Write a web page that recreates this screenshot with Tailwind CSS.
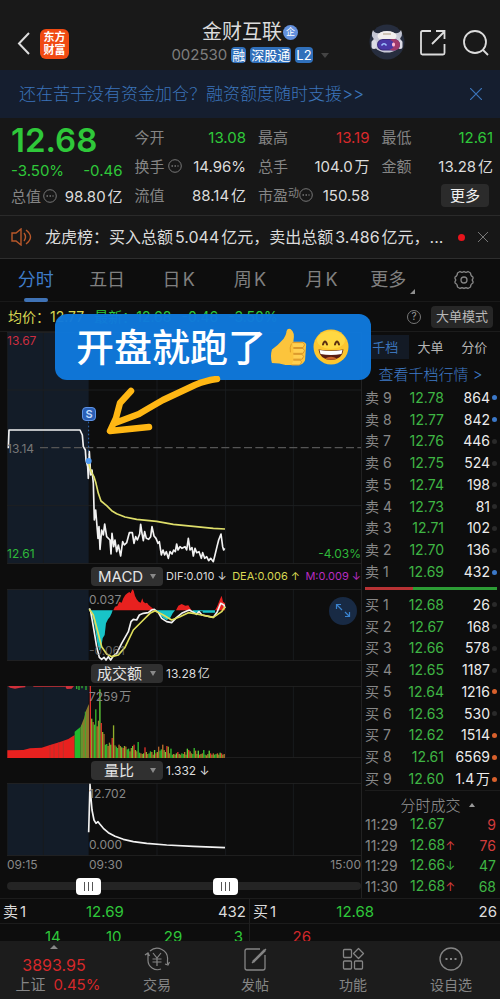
<!DOCTYPE html>
<html lang="zh-CN">
<head>
    <meta charset="UTF-8">
    <meta name="viewport" content="width=device-width, initial-scale=1.0">
    <title>金财互联 002530</title>
    <script src="https://cdn.jsdelivr.net/npm/@tailwindcss/browser@4"></script>
</head>
<body class="bg-[#0d0d0d] text-[#dcdcdc] font-['Inter','Noto_Sans_CJK_SC',sans-serif] leading-none [text-autospace:normal]">

    <!-- Header -->
    <header class="relative flex h-[70px] items-start justify-between bg-[#191919] pl-4 pr-[11px] pt-6">
        <div class="flex items-center gap-2 pt-1">
            <button aria-label="返回" class="h-8 w-4">
                <svg viewBox="0 0 16 32" class="h-8 w-4" fill="none" stroke="#dcdcdc" stroke-width="2"><path d="M13 5L3 15.500L13 26"/></svg>
            </button>
            <div class="w-[29px] rounded-md bg-[#f04a12] py-[2px] text-center text-[11px] font-bold leading-[13px] text-white">东方<br>财富</div>
        </div>
        <div class="absolute inset-x-20 top-[22px] flex flex-col items-center gap-[5px]">
            <h1 class="flex items-center text-xl leading-5">金财互联
                <span class="ml-px grid size-[15px] place-content-center rounded-full bg-[#6390dc] text-[9px] text-white">企</span>
            </h1>
            <div class="flex items-center gap-1 text-[13px] leading-4 text-white">
                <span class="text-[15px] text-[#7e7e7e]">002530</span>
                <span class="rounded-sm bg-[#3070bb] px-px">融</span>
                <span class="rounded-sm bg-[#3070bb] px-px">深股通</span>
                <span class="rounded-sm bg-[#3070bb] px-px">L2</span>
                <svg viewBox="0 0 8 5" class="ml-1 h-[5px] w-2"><path d="M0 0H8L4 5Z" fill="#444"/></svg>
            </div>
        </div>
        <div class="flex items-center gap-3.5">
            <svg viewBox="0 0 36 36" class="size-9">
                <circle cx="18" cy="18" r="17.500" fill="#262d3e"/>
                <path d="M6 16Q1 12 4 6Q6 10 11 9ZM29 16Q35 12 32 6Q30 10 25 9Z" fill="#c3c5d2"/>
                <ellipse cx="18" cy="18" rx="14" ry="10.500" fill="#c9cad8"/>
                <ellipse cx="18" cy="12" rx="9.500" ry="5" fill="#f1eeee"/>
                <path d="M14 10H22" stroke="#b9a890" stroke-width="1.200"/>
                <rect x="2.500" y="16" width="5" height="9" rx="2.500" fill="#dcdce6"/>
                <rect x="28.500" y="16" width="5" height="9" rx="2.500" fill="#dcdce6"/>
                <rect x="8" y="15" width="23" height="11.500" rx="5.750" fill="#3b2b7c"/>
                <rect x="18" y="15" width="13" height="11.500" rx="5.750" fill="#a03a6c"/>
                <rect x="9" y="16" width="16" height="9.500" rx="4.750" fill="#4a38a6"/>
                <path d="M12.500 21.500Q15 18 17.500 21.500" fill="none" stroke="#9cc2ff" stroke-width="1.500"/>
                <rect x="23" y="18.500" width="3" height="4" rx="1.500" fill="#ffb6d2"/>
            </svg>
            <button aria-label="分享" class="size-7">
                <svg viewBox="0 0 28 28" class="size-7" fill="none" stroke="#dcdcdc" stroke-width="1.800"><path d="M12 3H3.500Q2 3 2 4.500V25Q2 26.500 3.500 26.500H24Q25.500 26.500 25.500 25V16M13 16L25 4M17 3H25.500V11"/></svg>
            </button>
            <button aria-label="搜索" class="size-7">
                <svg viewBox="0 0 28 28" class="size-7" fill="none" stroke="#dcdcdc" stroke-width="1.800"><circle cx="14" cy="14" r="11"/><path d="M22 22L27 27"/></svg>
            </button>
        </div>
    </header>

    <div class="flex h-12 items-center justify-between bg-[#151e2f] pl-[19px] pr-[18px] text-[#3b74ba]">
        <a href="#" class="text-[17px] font-light">还在苦于没有资金加仓？融资额度随时支援&gt;&gt;</a>
        <button aria-label="关闭"><svg viewBox="0 0 12 12" class="size-3" stroke="#3b74ba" stroke-width="1.200"><path d="M0 0L12 12M12 0L0 12"/></svg></button>
    </div>

    <!-- Quote summary -->
    <section class="grid h-[98px] grid-cols-4 gap-x-3 border-b border-[#2a2a2a] bg-[#171717] pl-[11px] pr-[7px] pt-[5px] text-[15px]">
        <div class="text-[#2fc83a]">
            <div class="flex h-[34px] items-center text-[33px] font-semibold">12.68</div>
            <div class="flex h-[26px] items-center justify-between"><span>-3.50%</span><span>-0.46</span></div>
            <div class="flex h-[27px] items-center justify-between whitespace-nowrap text-[#dcdcdc]">
                <span class="flex text-[#858585]">总值<svg viewBox="0 0 14 14" class="ml-0.5 size-[14px]" fill="none" stroke="#777"><circle cx="7" cy="7" r="6.300"/><path d="M3.500 7H10.500" stroke-width="1.500" stroke-dasharray="1.500 1.500"/></svg></span>98.80亿
            </div>
        </div>
        <div>
            <div class="flex h-[29px] items-center justify-between text-[#2fc83a]"><span class="text-[#858585]">今开</span>13.08</div>
            <div class="flex h-[29px] items-center justify-between">
                <span class="flex text-[#858585]">换手<svg viewBox="0 0 14 14" class="ml-[3px] size-[14px]" fill="none" stroke="#777"><circle cx="7" cy="7" r="6.300"/><path d="M3.500 7H10.500" stroke-width="1.500" stroke-dasharray="1.500 1.500"/></svg></span>14.96%
            </div>
            <div class="flex h-[29px] items-center justify-between"><span class="text-[#858585]">流值</span>88.14亿</div>
        </div>
        <div>
            <div class="flex h-[29px] items-center justify-between text-[#d8292b]"><span class="text-[#858585]">最高</span>13.19</div>
            <div class="flex h-[29px] items-center justify-between"><span class="text-[#858585]">总手</span>104.0万</div>
            <div class="flex h-[29px] items-center justify-between">
                <span class="flex text-[#858585]">市盈<span class="text-[11px]">动</span><svg viewBox="0 0 14 14" class="size-[14px]" fill="none" stroke="#777"><circle cx="7" cy="7" r="6.300"/><path d="M3.500 7H10.500" stroke-width="1.500" stroke-dasharray="1.500 1.500"/></svg></span>150.58
            </div>
        </div>
        <div>
            <div class="flex h-[29px] items-center justify-between text-[#2fc83a]"><span class="text-[#858585]">最低</span>12.61</div>
            <div class="flex h-[29px] items-center justify-between"><span class="text-[#858585]">金额</span>13.28亿</div>
            <div class="flex h-[29px] items-center justify-end pr-1"><button class="h-[23px] rounded-sm bg-[#2b2b2b] px-[9px] text-[#f0f0f0]">更多</button></div>
        </div>
    </section>

    <div class="flex h-[43px] items-center border-b border-[#2e2e2e] bg-[#171717] pl-[11px] pr-3">
        <svg viewBox="0 0 22 18" class="h-[18px] w-[22px]" fill="none" stroke="#b9582a" stroke-width="1.400"><path d="M1 5H5L10 1V17L5 13H1ZM13 5Q16 9 13 13M15 2Q24 9 15 16"/></svg>
        <p class="ml-3 flex-1 whitespace-nowrap text-base">龙虎榜：买入总额5.044亿元，卖出总额3.486亿元，...</p>
        <span class="size-[7px] rounded-full bg-[#e8141c]"></span>
        <button aria-label="关闭" class="ml-[13px]"><svg viewBox="0 0 10 10" class="size-[10px]" stroke="#777"><path d="M0 0L10 10M10 0L0 10"/></svg></button>
    </div>

    <!-- Period tabs -->
    <nav class="grid h-[43px] grid-cols-7 items-center border-b border-[#191919] text-lg text-[#808080] *:justify-self-center">
        <button class="relative text-[#3f7cc8]">分时<span class="absolute inset-x-1.5 -bottom-2 h-1 rounded-full bg-[#3f72b5]"></span></button>
        <button>五日</button>
        <button>日K</button>
        <button>周K</button>
        <button>月K</button>
        <button class="flex items-end gap-1">更多<svg viewBox="0 0 5 5" class="size-[5px]"><path d="M5 0V5H0Z" fill="#909090"/></svg></button>
        <button aria-label="设置">
            <svg viewBox="0 0 20 20" class="size-5" fill="none" stroke="#858585" stroke-width="1.300" stroke-linejoin="round"><path d="M6 1.500Q8 3 10 1.500Q12 3 14 1.500L16.500 3Q16.500 6 19 7V8.500Q17.500 10 19 11.500V13Q16.500 14 16.500 17L14 18.500Q12 17 10 18.500Q8 17 6 18.500L3.500 17Q3.500 14 1 13V11.500Q2.500 10 1 8.500V7Q3.500 6 3.500 3Z"/><circle cx="10" cy="10" r="3"/></svg>
        </button>
    </nav>

    <div class="relative">
        <div class="flex h-[30px] items-center border-b border-[#1c1c1c] pl-2 pr-[7px] text-sm">
            <div class="flex flex-1 gap-2.5 text-[#2fc83a]">
                <span class="text-[#d8d852]">均价：12.77</span><span>最新：12.68</span><span>-0.46</span><span>-3.50%</span>
            </div>
            <button aria-label="帮助" class="grid size-[14px] place-content-center rounded-full border border-[#777] text-[10px] text-[#999]">?</button>
            <button class="ml-2.5 h-[22px] rounded-sm bg-[#272727] px-[5px] text-[13px] text-[#b8b8b8]">大单模式</button>
        </div>

        <div class="flex">
            <!-- Charts -->
            <main class="min-w-0 flex-1 pl-[7px]">
                <div class="relative h-[232px]">
                    <svg id="price-chart" viewBox="21 -144 1062 696" preserveAspectRatio="none" class="h-full w-full" fill="none"></svg>
                    <span class="absolute left-0 top-px text-xs text-[#cc2e40]">13.67</span>
                    <span class="absolute left-0 top-[109px] text-xs text-[#777]">13.14</span>
                    <span class="absolute bottom-0.5 left-0 text-xs text-[#2fb93a]">12.61</span>
                    <span class="absolute bottom-0.5 right-0 text-xs text-[#2fb93a]">-4.03%</span>
                    <span class="absolute left-[75px] top-[75px] grid size-[14px] place-content-center rounded-sm border border-[#5f94e6] bg-[#2a5fb5] text-[11px] font-semibold text-[#c0dcff]">S</span>
                </div>
                <div class="flex h-[25px] items-center pl-[84px] text-[11px]">
                    <div class="relative">
                        <select aria-label="指标一" class="block h-[19px] w-[72px] appearance-none rounded-sm bg-[#303030] pl-[7px] text-[15px] text-[#e4e4e4]"><option>MACD</option></select>
                        <svg viewBox="0 0 6 5" class="pointer-events-none absolute right-[7px] top-[7px] h-[5px] w-1.5"><path d="M0 0H6L3 5Z" fill="#8a8a8a"/></svg>
                    </div>
                    <div class="flex flex-1 justify-between whitespace-nowrap pl-[3px]"><span>DIF:0.010 ↓</span><span class="text-[#d8d852]">DEA:0.006 ↑</span><span class="text-[#b82cc0]">M:0.009 ↓</span></div>
                </div>
                <div class="relative h-[72px]">
                    <svg id="macd-chart" viewBox="21 87 1062 216" preserveAspectRatio="none" class="h-full w-full" fill="none"></svg>
                    <span class="absolute left-[82px] top-[3px] text-xs text-[#888]">0.037</span>
                    <span class="absolute bottom-[2px] left-[82px] text-xs text-[#888]/70">-0.061</span>
                    <button aria-label="放大" class="absolute right-1 top-2 size-7 rounded-full bg-[#182a44]">
                        <svg viewBox="0 0 28 28" class="size-7" fill="none" stroke="#3a83cf" stroke-width="1.200"><path d="M13 13L8 8M7.500 12V7.500H12M16 15L20 19M20.500 15V19.500H16"/></svg>
                    </button>
                </div>
                <div class="flex h-[25px] items-center gap-[3px] pl-[84px] text-xs">
                    <div class="relative">
                        <select aria-label="指标二" class="block h-[19px] w-[72px] appearance-none rounded-sm bg-[#303030] pl-1.5 text-[15px] text-[#e4e4e4]"><option>成交额</option></select>
                        <svg viewBox="0 0 6 5" class="pointer-events-none absolute right-[7px] top-[7px] h-[5px] w-1.5"><path d="M0 0H6L3 5Z" fill="#8a8a8a"/></svg>
                    </div>
                    <span>13.28亿</span>
                </div>
                <div class="relative h-[72px]">
                    <svg id="volume-chart" viewBox="21 18 1062 216" preserveAspectRatio="none" class="h-full w-full" fill="none"></svg>
                    <span class="absolute left-[82px] top-[3px] text-xs text-[#888]">7259万</span>
                </div>
                <div class="flex h-[25px] items-center gap-[3px] pl-[84px] text-xs">
                    <div class="relative">
                        <select aria-label="指标三" class="block h-[19px] w-[72px] appearance-none rounded-sm bg-[#303030] pl-[13px] text-[15px] text-[#e4e4e4]"><option>量比</option></select>
                        <svg viewBox="0 0 6 5" class="pointer-events-none absolute right-[7px] top-[7px] h-[5px] w-1.5"><path d="M0 0H6L3 5Z" fill="#8a8a8a"/></svg>
                    </div>
                    <span>1.332 ↓</span>
                </div>
                <div class="relative h-[73px]">
                    <svg id="ratio-chart" viewBox="21 24 1062 219" preserveAspectRatio="none" class="h-full w-full" fill="none"></svg>
                    <span class="absolute left-[82px] top-[3px] text-xs text-[#888]">12.702</span>
                    <span class="absolute bottom-[3px] left-[82px] text-xs text-[#888]">0.000</span>
                </div>
                <div class="flex h-[18px] items-center text-xs text-[#888]">
                    <span class="w-[82px]">09:15</span><span>09:30</span><span class="ml-auto">15:00</span>
                </div>
                <div class="relative flex h-6 items-center">
                    <div class="h-2 w-full rounded-full bg-[#242424]"></div>
                    <input type="range" aria-label="开始时间" max="1000" value="211" class="pointer-events-none absolute inset-x-0 h-[17px] w-full appearance-none bg-transparent [&::-webkit-slider-thumb]:pointer-events-auto [&::-webkit-slider-thumb]:h-[17px] [&::-webkit-slider-thumb]:w-[25px] [&::-webkit-slider-thumb]:appearance-none [&::-webkit-slider-thumb]:rounded [&::-webkit-slider-thumb]:[background:repeating-linear-gradient(90deg,#555_0_1px,#fff_1px_4px)_center/9px_9px_no-repeat_#fff]">
                    <input type="range" aria-label="结束时间" max="1000" value="625" class="pointer-events-none absolute inset-x-0 h-[17px] w-full appearance-none bg-transparent [&::-webkit-slider-thumb]:pointer-events-auto [&::-webkit-slider-thumb]:h-[17px] [&::-webkit-slider-thumb]:w-[25px] [&::-webkit-slider-thumb]:appearance-none [&::-webkit-slider-thumb]:rounded [&::-webkit-slider-thumb]:[background:repeating-linear-gradient(90deg,#555_0_1px,#fff_1px_4px)_center/9px_9px_no-repeat_#fff]">
                </div>
            </main>

            <!-- Order book -->
            <aside class="w-[139px] border-l border-[#222] pl-[3px] text-[14px]">
                <div class="grid h-[30px] grid-cols-3 pr-1 text-[13px] text-[#b4b4b4]">
                    <button class="my-[3px] -ml-[3px] bg-[#131a25] text-[#3b74ba]">千档</button>
                    <button>大单</button>
                    <button>分价</button>
                </div>
                <a href="#" class="flex h-[25px] items-center justify-center pr-1 text-[15px] font-light text-[#3f7cc8]">查看千档行情 &gt;</a>
                <table class="h-[196px] w-full"><tbody id="asks"></tbody></table>
                <div class="flex h-[11px] items-center pr-[3px]"><div class="h-[3px] w-9/25 bg-[#b83234]"></div><div class="h-[3px] flex-1 bg-[#2c9c35]"></div></div>
                <table class="h-[196px] w-full"><tbody id="bids"></tbody></table>
                <button class="flex h-[25px] w-full items-center justify-center gap-2 border-t border-[#1c1c1c] pl-2.5 pt-1 text-[15px] font-light text-[#999]">分时成交<svg viewBox="0 0 6 4" class="h-1 w-1.5"><path d="M0 4H6L3 0Z" fill="#999"/></svg></button>
                <table class="h-[82px] w-full"><tbody id="ticks"></tbody></table>
            </aside>
        </div>

        <!-- Sticker and arrow laid over the chart -->
        <div class="absolute left-[55px] top-3 flex h-[66px] w-[316px] items-center rounded-xl bg-[#1079dc]/97 pl-[21px] text-[38px] font-medium text-white">开盘就跑了
            <svg viewBox="0 0 38 40" class="ml-1 h-[39px] w-[37px]" role="img" aria-label="点赞">
                <path d="M2 22Q8 18 14 11Q17 6 17 3Q18 0 21 1Q26 4 24 14H34Q38 15 37 19L36 33Q34 38 28 38H16Q10 36 2 36Q0 29 2 22Z" fill="#fcc43c"/>
                <path d="M23 15H34Q37 17 34 20H24M24 21H34Q37 23 34 26H24M24 27H33Q36 29 33 32H24M24 33H31Q34 35 30 38H22" fill="#ffcf50" stroke="#d8952a"/>
                <path d="M22 16Q20 20 21 25" fill="none" stroke="#dd9a25"/>
            </svg>
            <svg viewBox="0 0 36 36" class="ml-1.5 size-9" role="img" aria-label="大笑">
                <circle cx="18" cy="18" r="17.500" fill="#fdc62f"/>
                <ellipse cx="18" cy="11" rx="14" ry="9" fill="#ffe04a" opacity=".7"/>
                <path d="M10 15.500Q12 9.500 14 15.500M22 15.500Q24 9.500 26 15.500" fill="none" stroke="#5a2d10" stroke-width="2" stroke-linecap="round"/>
                <path d="M5.500 20.500Q18 22.500 30.500 20.500Q29 31 18 31Q7 31 5.500 20.500Z" fill="#5a1d12"/>
                <path d="M6.500 21Q18 23 29.500 21L28.500 25Q18 27 7.500 25Z" fill="#fff"/>
                <path d="M12 29.500Q18 26 24 29.500Q18 32 12 29.500Z" fill="#c9622a"/>
            </svg>
        </div>
        <svg viewBox="0 0 120 62" class="pointer-events-none absolute left-[105px] top-[74px] h-[62px] w-[120px]" fill="none" stroke="#ffb714" stroke-width="6.500" stroke-linecap="round" stroke-linejoin="round"><path d="M112 3Q102 4 90 9L58 24Q44 32 34 38L10 47M26 15L15 27L11 42L5 55L44 51"/></svg>
    </div>

    <!-- Best bid / ask -->
    <section class="grid grid-cols-2 border-t border-[#1c1c1c] text-[15px]">
        <div class="border-r border-[#1f1f1f]">
            <div class="grid h-[25px] grid-cols-3 items-center border-b border-[#1c1c1c] px-[3px]"><span>卖1</span><span class="pl-0.5 text-[#2fc83a]">12.69</span><span class="text-right">432</span></div>
            <div class="grid h-[17px] grid-cols-4 overflow-hidden pr-1.5 pt-[5px] text-right text-[#2fc83a]"><span>14</span><span>10</span><span>29</span><span>3</span></div>
        </div>
        <div>
            <div class="grid h-[25px] grid-cols-3 items-center border-b border-[#1c1c1c] px-[3px]"><span>买1</span><span class="pl-0.5 text-[#2fc83a]">12.68</span><span class="text-right">26</span></div>
            <div class="grid h-[17px] grid-cols-4 overflow-hidden pr-1.5 pt-[5px] text-right text-[#d0282b]"><span>26</span></div>
        </div>
    </section>

    <!-- Bottom bar -->
    <footer class="flex h-[59px] bg-[#1c1c1c] text-sm text-[#858585]">
        <button class="flex w-[108px] flex-col items-center pt-1">
            <svg viewBox="0 0 8 4" class="h-1 w-2"><path d="M0 4H8L4 0Z" fill="#888"/></svg>
            <span class="mt-2 text-base leading-4 text-[#d6282a]">3893.95</span>
            <span class="mt-1 flex gap-2 pl-2 text-[15px] leading-4">上证<span class="text-[#d6282a]">0.45%</span></span>
        </button>
        <button class="flex flex-1 flex-col items-center gap-1 pt-1.5">
            <svg viewBox="0 0 26 24" class="h-6 w-[26px]" fill="none" stroke="#858585" stroke-width="1.200"><path d="M1 8L4 6L5.500 9M4 6.500V13A9.500 9.500 0 0 0 17 22M6 4A10.500 10.500 0 0 1 23.500 13V17M21 17L24 18L25.500 15M9 6L13 11L17 6M8.500 12H17.500M8.500 15H17.500M13 11V19"/></svg>交易
        </button>
        <button class="flex flex-1 flex-col items-center gap-1 pt-1.5">
            <svg viewBox="0 0 24 24" class="size-6" fill="none" stroke="#858585" stroke-width="1.300"><path d="M17 2H4Q2 2 2 4V21Q2 23 4 23H20Q22 23 22 21V8M9 16L23 2"/><path d="M10 15L22 3" stroke-width="2.500"/></svg>发帖
        </button>
        <button class="flex flex-1 flex-col items-center gap-1 pt-1.5">
            <svg viewBox="0 0 24 24" class="size-6" fill="none" stroke="#858585" stroke-width="1.300"><rect x="2.500" y="2.500" width="8" height="8" rx="1"/><rect x="2.500" y="14" width="8" height="8" rx="1"/><rect x="13.500" y="14" width="8" height="8" rx="1"/><path d="M17.500 1.500L22.500 6.500L17.500 11.500L12.500 6.500Z" stroke-linejoin="round"/></svg>功能
        </button>
        <button class="flex flex-1 flex-col items-center gap-1 pt-1.5">
            <svg viewBox="0 0 24 24" class="size-6" fill="none" stroke="#858585" stroke-width="1.300"><circle cx="12" cy="12" r="11"/><path d="M6.500 12H8.500M11 12H13M15.500 12H17.500" stroke-width="2"/></svg>设自选
        </button>
    </footer>

    <script>
        const GRID_X = [22, 130, 471, 677, 880];

        function frame(top, bottom) {
            let out = `<rect x="21" y="${top}" width="245" height="${bottom - top}" fill="#131c28"/>`;
            GRID_X.forEach(x => { out += `<path d="M${x} ${top}V${bottom}" stroke="#181b1e" stroke-width="3"/>`; });
            out += `<path d="M21 ${top + 1}H1083M21 ${bottom - 1}H1083" stroke="#222" stroke-width="3"/>`;
            return out;
        }

        function line(points, color) {
            return `<polyline points="${points}" stroke="${color}" stroke-width="5" stroke-linejoin="round"/>`;
        }

        // Price and average price
        const price = '25,205 27,150 240,150 247,165 250,200 256,210 258,240 263,260 265,295 268,215 272,285 276,270 280,310 283,420 287,390 294,475 297,440 300,508 305,450 310,465 314,432 320,470 330,480 333,522 336,460 341,500 345,480 350,515 355,495 362,528 368,485 373,495 380,488 388,458 397,458 402,490 407,470 412,480 419,462 422,433 426,460 430,482 434,455 439,475 446,478 452,470 456,440 462,468 468,475 474,490 478,485 484,525 489,510 494,525 499,515 505,535 510,515 516,522 521,510 526,515 530,492 534,510 540,500 546,505 555,500 560,510 565,475 570,510 576,503 580,528 585,505 590,518 597,515 604,535 608,518 614,535 620,530 626,542 632,535 640,545 645,525 651,500 656,480 663,462 668,500 671,510 674,505';
        const average = '266,250 270,265 276,280 282,290 288,310 295,340 303,363 320,377 335,392 350,401 375,411 410,418 470,424 520,433 580,439 640,445 675,447';
        document.getElementById('price-chart').innerHTML = frame(-144, 552) +
            '<path d="M21 30H1083M21 377H1083" stroke="#1d1f21" stroke-width="3"/>' +
            '<path d="M120 203H1083" stroke="#555" stroke-width="4" stroke-dasharray="24 10"/>' +
            '<path d="M266 125V240" stroke="#2f6cb8" stroke-width="3" stroke-dasharray="5 7"/>' +
            line(price, '#f2f2f2') + line(average, '#dede6a') +
            '<circle cx="266" cy="243" r="9" fill="#4f9af0"/>';

        // MACD
        const red = '#e8211f', cyan = '#18c4c8';
        document.getElementById('macd-chart').innerHTML = frame(87, 303) +
            `<path fill="${cyan}" d="M272 151L280 180L286 210L292 250L298 272L304 262L308 235L314 225L318 190L324 178L330 170L335 160L338 151ZM470 151L480 165L490 175L500 180L510 175L518 160L525 151ZM578 151V158H598V154H608V158H645V151Z"/>` +
            `<path fill="${red}" d="M340 151L345 140L352 138L358 125L365 128L370 115L376 105L382 100L388 96L392 100L397 88L401 92L405 108L410 118L416 125L422 128L427 115L430 125L436 130L441 128L446 135L452 140L460 146L465 151ZM528 151L535 137L545 132L556 137L565 136L572 147L575 151ZM645 151L652 138L660 118L665 107L669 125L675 130V151Z"/>` +
            line('268,145 272,155 280,200 290,260 298,292 305,298 312,292 318,300 325,290 332,300 340,288 350,280 365,250 385,215 393,185 400,178 410,180 418,165 430,160 445,158 455,150 463,148 475,158 485,175 500,185 515,188 530,172 545,160 560,153 568,150 580,157 590,163 597,155 606,165 640,172 652,155 662,130 672,135 675,145', '#f2f2f2') +
            line('268,148 280,165 292,210 305,260 320,282 335,290 355,285 375,262 400,210 430,180 450,160 465,152 490,165 515,180 540,170 565,158 590,162 640,172 665,155 675,140', '#dede5a');

        // Turnover: auction area, then one bar per interval after the open
        const bars = [216,118,108,100,146,95,112,206,105,78,72,40,42,36,46,40,60,98,38,34,30,40,36,32,30,36,34,26,28,20,30,36,40,24,20,48,16,14,12,14,32,18,12,14,20,18,10,24,14,18,34,22,26,40,24,18,36,34,14,28,10,12,10,14,18,12,10,14,12,18,10,28,24,20,14,12,30,22,12,22,10,12,14,24,10,8,12,22,14,10,14,10,12,14,10,16,14,10,12];
        const tones = ['#e0302a', '#8fae2c', '#b0622a', '#2fc030', '#37b82e', '#c0702c', '#9a8a2c', '#62d63a'];
        let volume = frame(18, 234) +
            '<path fill="#e8211f" d="M22 234V211L70 210L90 205L125 203L150 195L180 186L205 177L224 165V234Z"/>' +
            '<path stroke="#b8322a" stroke-width="3" d="M150 195V234M162 192V234M176 188V234M190 184V234"/>' +
            '<path fill="#22b82c" d="M224 234V155L242 140V234Z"/>' +
            '<path fill="#8b7a2c" d="M242 234V140L252 115L258 92L263 80L267 72V234Z"/>' +
            '<path stroke="#3fae30" stroke-width="3" d="M246 135V234M256 95V234"/>' +
            '<path fill="#d0303a" d="M24 18H76V22L60 23L45 26L30 23ZM100 18H195V20H100ZM195 18H222L215 26L200 27Z"/>' +
            '<path stroke="#2fb030" stroke-width="4" d="M230 18V27M237 18V30M246 18V25M258 18V30"/>';
        bars.forEach((h, i) => {
            const x = 269 + i * 4.1;
            volume += `<rect x="${x}" y="${234 - h}" width="4" height="${h}" fill="${tones[i % tones.length]}"/>`;
        });
        document.getElementById('volume-chart').innerHTML = volume;

        // Volume ratio
        document.getElementById('ratio-chart').innerHTML = frame(24, 243) +
            line('266,172 268,100 270,28 273,70 276,105 282,135 288,145 294,140 300,148 310,160 325,173 345,184 370,193 400,200 440,205 500,210 580,214 675,218', '#f2f2f2');

        const asks = [[9, '12.78', '864', 'bg-[#3b78c8]'], [8, '12.77', '842', 'bg-[#3b78c8]'], [7, '12.76', '446', 'bg-[#2a2a2a]'], [6, '12.75', '524', 'bg-[#2a2a2a]'], [5, '12.74', '198', 'bg-[#2a2a2a]'], [4, '12.73', '81', 'bg-[#2a2a2a]'], [3, '12.71', '102', 'bg-[#2a2a2a]'], [2, '12.70', '136', 'bg-[#2a2a2a]'], [1, '12.69', '432', 'bg-[#3b78c8]']];
        const bids = [[1, '12.68', '26', 'bg-[#2a2a2a]'], [2, '12.67', '168', 'bg-[#2a2a2a]'], [3, '12.66', '578', 'bg-[#2a2a2a]'], [4, '12.65', '1187', 'bg-[#2a2a2a]'], [5, '12.64', '1216', 'bg-[#d8602c]'], [6, '12.63', '530', 'bg-[#2a2a2a]'], [7, '12.62', '1514', 'bg-[#d8602c]'], [8, '12.61', '6569', 'bg-[#d8602c]'], [9, '12.60', '1.4万', 'bg-[#d8602c]']];

        function renderBook(id, label, rows) {
            document.getElementById(id).innerHTML = rows.map(([level, cost, lots, dot]) => `
                <tr>
                    <td class="p-0 text-[#888]">${label} ${level}</td>
                    <td class="p-0 text-right text-[#3fb544]">${cost}</td>
                    <td class="w-[46px] p-0 text-right text-[#ececec]">${lots}</td>
                    <td class="w-2.5 p-0 pl-0.5"><span class="block size-[5px] rounded-full ${dot}"></span></td>
                </tr>`).join('');
        }
        renderBook('asks', '卖', asks);
        renderBook('bids', '买', bids);

        const ticks = [['11:29', '12.67', '', '9', 'text-[#d23c3c]'], ['11:29', '12.68', '↑', '76', 'text-[#d23c3c]'], ['11:29', '12.66', '↓', '47', 'text-[#3fb544]'], ['11:30', '12.68', '↑', '68', 'text-[#d23c3c]']];
        document.getElementById('ticks').innerHTML = ticks.map(([time, cost, arrow, lots, tone]) => `
            <tr>
                <td class="w-[45px] p-0 text-[#888]">${time}</td>
                <td class="p-0 text-[#3fb544]">${cost}<span class="text-xs ${tone}">${arrow}</span></td>
                <td class="p-0 pr-1 text-right ${lots === '68' ? 'text-[#3fb544]' : tone}">${lots}</td>
            </tr>`).join('');
    </script>
</body>
</html>
